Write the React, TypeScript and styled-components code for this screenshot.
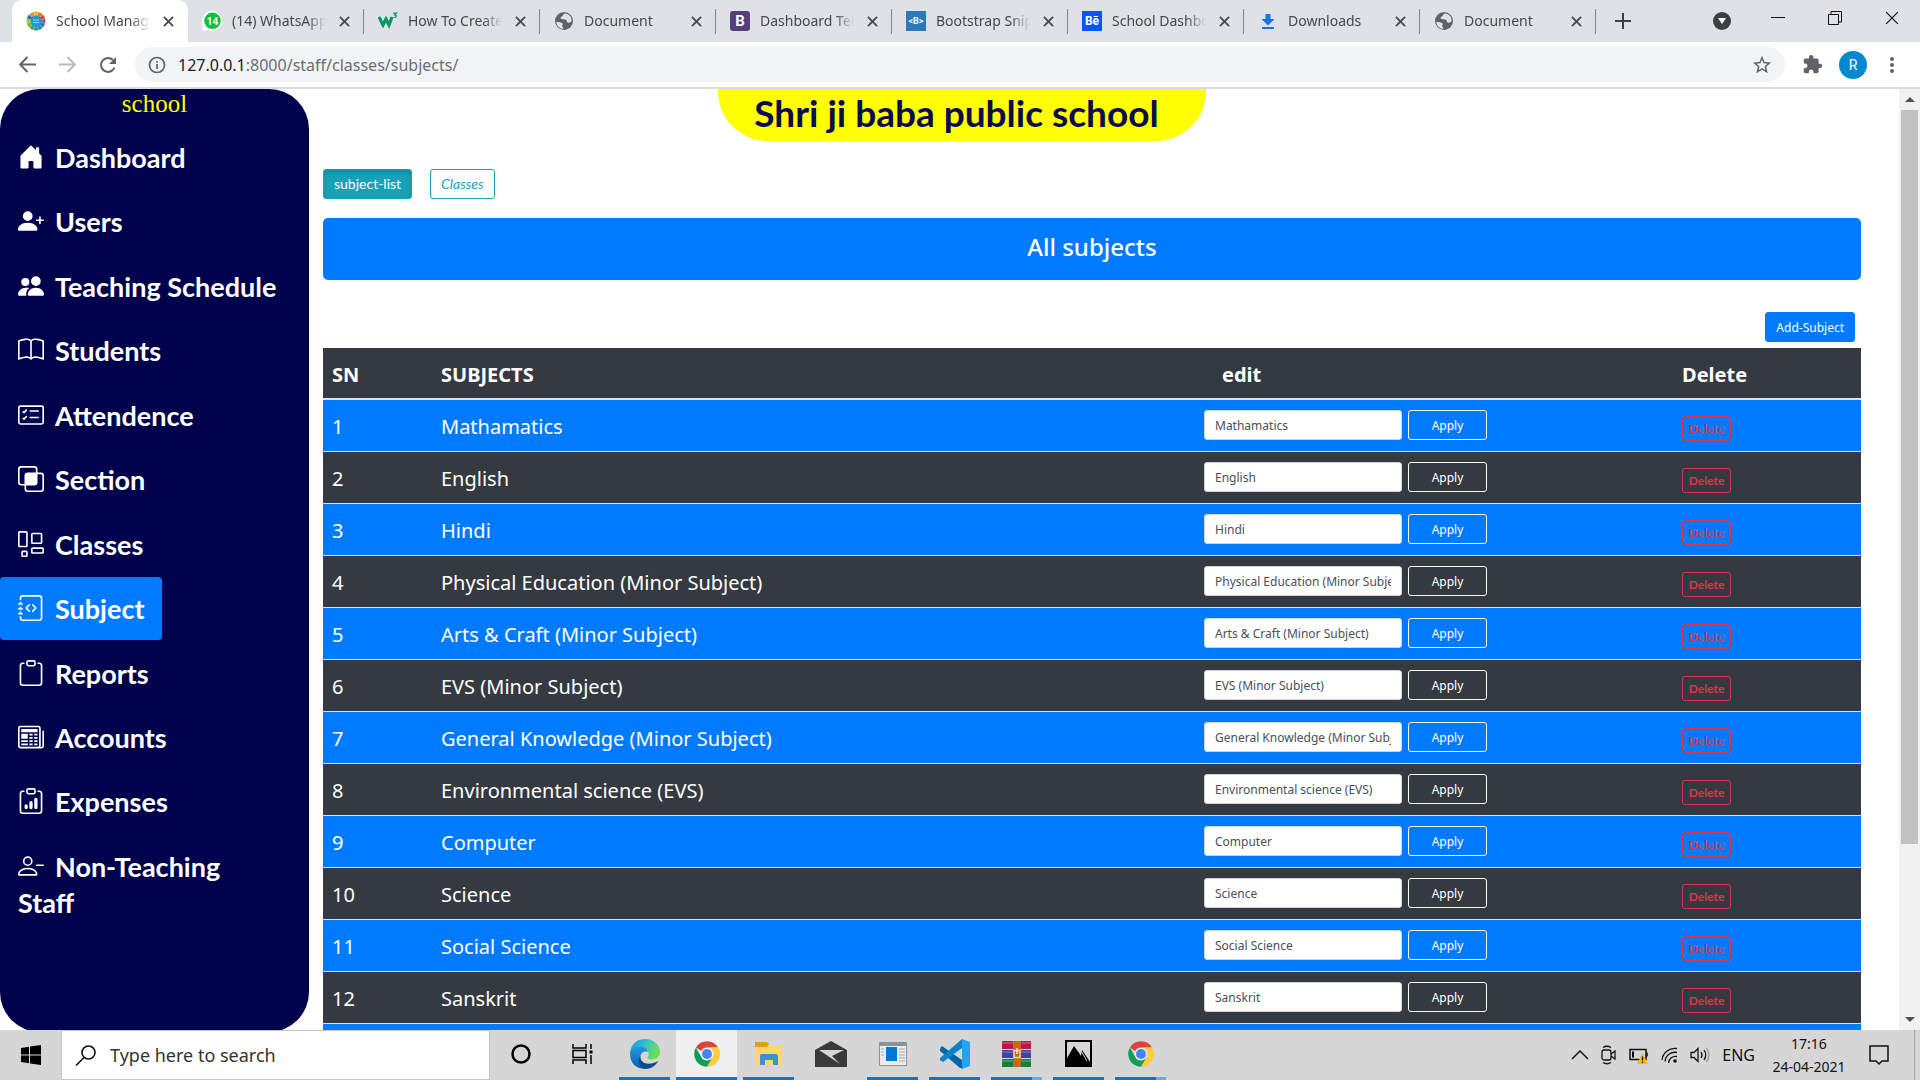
import React from "react";
import styled, { createGlobalStyle, css } from "styled-components";
import {
  BsBook,
  BsCardChecklist,
  BsClipboard,
  BsClipboardData,
  BsIntersect,
  BsJournalCode,
  BsLayoutWtf,
  BsNewspaper,
  BsPersonPlusFill,
} from "react-icons/bs";
import { MdExtension, MdStarBorder } from "react-icons/md";

const ui = '"Segoe UI", "Noto Sans", "Open Sans", sans-serif';
const comic = '"Comic Sans MS", Lato, "Open Sans", sans-serif';
const navy = "#00034b";
const blue = "#007bff";
const dark = "#343a40";
const teal = "#17a2b8";
const red = "#dc3545";

const GlobalStyle = createGlobalStyle`
  *, *::before, *::after { box-sizing: border-box; }
  body { margin: 0; background: #fff; font-family: ${ui}; overflow: hidden; }
  button, input { font-family: inherit; margin: 0; }
  a { text-decoration: none; }
  svg { display: block; flex: none; }
`;

const Screen = styled.div`
  display: flex;
  flex-direction: column;
  height: 100vh;
`;

/* ---------- Browser chrome ---------- */

const TabStrip = styled.div`
  display: flex;
  align-items: flex-end;
  height: 42px;
  padding-left: 12px;
  background: #dee1e6;
`;

const Tab = styled.div<{ $active?: boolean }>`
  display: flex;
  align-items: center;
  flex: 0 1 176px;
  min-width: 0;
  height: 42px;
  padding: 0 12px 0 14px;
  gap: 10px;
  color: #45494d;
  background: ${(p) => (p.$active ? "#fff" : "transparent")};
  border-radius: 10px 10px 0 0;
`;

const TabTitle = styled.span`
  flex: 1;
  min-width: 0;
  overflow: hidden;
  white-space: nowrap;
  font-size: 14px;
  line-height: 20px;
  mask-image: linear-gradient(to right, #000 80%, transparent 100%);
`;

const TabDivider = styled.span`
  flex: none;
  width: 1px;
  height: 25px;
  margin: 0 0 8px -1px;
  background: #85888c;
`;

const IconButton = styled.button<{ $w?: number }>`
  display: flex;
  align-items: center;
  justify-content: center;
  flex: none;
  width: ${(p) => p.$w ?? 16}px;
  height: ${(p) => (p.$w ? 36 : 16)}px;
  padding: 0;
  border: 0;
  background: none;
  color: inherit;
`;

const WindowControls = styled.div`
  display: flex;
  align-items: center;
  align-self: flex-start;
  height: 36px;
  margin-left: auto;
  color: #111;
`;

const NewTab = styled.div`
  display: flex;
  align-self: center;
  padding-left: 9px;
  color: #3c4043;
`;

const Toolbar = styled.div`
  display: flex;
  align-items: center;
  height: 47px;
  padding: 0 3px 0 7px;
  background: #fff;
  border-bottom: 2px solid #dadce0;
  color: #5f6368;
`;

const AddressBar = styled.div`
  display: flex;
  flex: 1;
  align-items: center;
  height: 35px;
  margin-left: 7px;
  padding: 0 12px 0 13px;
  gap: 12px;
  border-radius: 18px;
  background: #f1f3f4;
`;

const Address = styled.div`
  flex: 1;
  font-size: 16px;
  line-height: 24px;
  color: #6a6e72;
  b { font-weight: 400; color: #202124; }
`;

const Avatar = styled.span`
  display: flex;
  align-items: center;
  justify-content: center;
  width: 28px;
  height: 28px;
  border-radius: 50%;
  background: #0288d1;
  color: #fff;
  font: 14px Roboto, sans-serif;
`;

/* ---------- Web page ---------- */

const Page = styled.div`
  display: flex;
  flex: 1;
  min-height: 0;
  overflow: hidden;
`;

const Sidebar = styled.aside`
  flex: none;
  width: 309px;
  height: calc(100% + 2px);
  border-radius: 40px;
  background: ${navy};
`;

const Brand = styled.div`
  text-align: center;
  font: 25px/29px "Times New Roman", "Liberation Serif", serif;
  color: #ff0;
`;

const Nav = styled.nav`
  display: flex;
  flex-direction: column;
  align-items: flex-start;
  gap: 2px;
  padding: 8px 12px 0 0;
`;

const NavLink = styled.a<{ $active?: boolean }>`
  padding: 14px 18px 12px;
  border-radius: 4px;
  background: ${(p) => (p.$active ? blue : "transparent")};
  color: #fff;
  font-family: ${comic};
  font-size: 27px;
  font-weight: 700;
  line-height: 1.35;
  svg {
    display: inline-block;
    width: 26px;
    height: 26px;
    margin-right: 11px;
    vertical-align: -2px;
  }
`;

const Content = styled.main`
  flex: 1;
  min-width: 0;
  padding: 0 38px 0 14px;
`;

const SchoolName = styled.h1`
  width: fit-content;
  height: 52px;
  margin: 0 auto;
  padding: 0 47px 0 36px;
  border-radius: 0 0 50px 50px;
  background: #ff0;
  color: #0b0b50;
  font-family: ${comic};
  font-size: 37px;
  font-weight: 700;
  line-height: 48px;
  white-space: nowrap;
`;

const TitleRow = styled.div`
  padding-right: 260px;
`;

const PillRow = styled.div`
  display: flex;
  gap: 18px;
  margin: 28px 0 19px;
`;

const Pill = styled.a<{ $active?: boolean }>`
  height: 30px;
  padding: 0 10px;
  border: 1px solid ${teal};
  border-radius: 3px;
  font-family: ${comic};
  font-size: 14px;
  line-height: 28px;
  ${(p) =>
    p.$active
      ? css`
          background: ${teal};
          color: #fff;
          box-shadow: inset 0 3px 5px rgba(0, 0, 0, 0.15);
        `
      : css`
          color: ${teal};
          font-style: italic;
        `}
`;

const Banner = styled.h2`
  height: 62px;
  margin: 0;
  border-radius: 5px;
  background: ${blue};
  color: #fff;
  text-align: center;
  font-size: 24px;
  font-weight: 500;
  line-height: 58px;
`;

const Actions = styled.div`
  display: flex;
  justify-content: flex-end;
  padding: 32px 6px 6px 0;
`;

const AddButton = styled.button`
  height: 30px;
  padding: 0 10px;
  border: 1px solid ${blue};
  border-radius: 3px;
  background: ${blue};
  color: #fff;
  font-size: 12px;
`;

const Table = styled.table`
  width: 100%;
  border-spacing: 0;
  table-layout: fixed;
  color: #fff;
  font-size: 20px;
`;

const Th = styled.th<{ $w?: number; $indent?: boolean }>`
  width: ${(p) => (p.$w ? p.$w + "px" : "auto")};
  height: 52px;
  padding: 2px 0 0 ${(p) => (p.$indent ? 27 : 9)}px;
  border-bottom: 2px solid #dee2e6;
  background: ${dark};
  text-align: left;
  font-size: 20px;
  font-weight: 700;
`;

const Row = styled.tr`
  background: ${dark};
  &:nth-child(odd) { background: ${blue}; }
`;

const Td = styled.td<{ $align?: "top" | "bottom" }>`
  height: 52px;
  padding: ${(p) => (p.$align ? "10px 0 10px 9px" : "2px 0 0 9px")};
  border-bottom: 1px solid #dee2e6;
  vertical-align: ${(p) => p.$align ?? "middle"};
`;

const EditForm = styled.form`
  display: flex;
  gap: 6px;
`;

const NameInput = styled.input`
  width: 198px;
  height: 30px;
  padding: 0 10px;
  border: 1px solid #ced4da;
  border-radius: 3px;
  background: #fff;
  color: #495057;
  font-size: 12px;
`;

const ApplyButton = styled.button`
  width: 79px;
  height: 30px;
  padding: 0;
  border: 1px solid #f8f9fa;
  border-radius: 3px;
  background: transparent;
  color: #fff;
  font-size: 12px;
`;

const DeleteButton = styled.button`
  display: block;
  width: 49px;
  height: 25px;
  padding: 0;
  border: 1px solid ${red};
  border-radius: 3px;
  background: transparent;
  color: ${red};
  font-family: ${comic};
  font-size: 12px;
  font-weight: 700;
`;

const ScrollTrack = styled.div`
  display: flex;
  flex-direction: column;
  align-items: center;
  flex: none;
  width: 21px;
  background: #f1f1f1;
`;

const ScrollArrow = styled.span`
  display: flex;
  align-items: center;
  justify-content: center;
  height: 21px;
`;

const ScrollThumb = styled.span`
  flex: 0 0 78%;
  width: 17px;
  margin-bottom: auto;
  background: #c1c1c1;
`;

/* ---------- Taskbar ---------- */

const Taskbar = styled.footer`
  display: flex;
  flex: none;
  height: 50px;
  background: #d6d6d6;
  color: #111;
`;

const StartButton = styled.button`
  display: flex;
  align-items: center;
  justify-content: center;
  width: 61px;
  padding: 0;
  border: 0;
  background: none;
`;

const SearchBox = styled.label`
  display: flex;
  align-items: center;
  width: 429px;
  padding-left: 13px;
  gap: 14px;
  border: 1px solid #c6c6c6;
  background: #fff;
`;

const SearchInput = styled.input`
  flex: 1;
  min-width: 0;
  padding: 0;
  border: 0;
  outline: 0;
  background: none;
  font-size: 18px;
  &::placeholder { color: #333; opacity: 1; }
`;

const AppList = styled.div`
  display: flex;
  gap: 1px;
`;

const AppButton = styled.button<{ $running?: boolean; $focused?: boolean; $stacked?: boolean }>`
  display: flex;
  flex-direction: column;
  align-items: center;
  justify-content: center;
  width: 61px;
  padding: 0;
  border: 0;
  background: ${(p) => (p.$focused ? "#efefef" : "transparent")};
  svg { margin: auto; }
  &::after {
    content: "";
    width: ${(p) => (p.$focused ? 61 : 51)}px;
    height: 3px;
    background: ${(p) =>
      p.$stacked
        ? "linear-gradient(to right, #0078d7 80%, #62adeb 80%)"
        : p.$running
          ? "#0078d7"
          : "transparent"};
  }
`;

const Tray = styled.div`
  display: flex;
  align-items: center;
  gap: 12px;
  margin-left: auto;
  font-size: 16px;
`;

const Clock = styled.time`
  width: 76px;
  margin: 0 10px 0 4px;
  text-align: center;
  font-size: 14px;
  line-height: 23px;
  white-space: nowrap;
`;

const ShowDesktop = styled.span`
  width: 6px;
  height: 50px;
  margin-left: 13px;
  border-left: 1px solid #a2a2a2;
`;

/* ---------- Icons ---------- */

const Cross = ({ size = 12, w = 2 }: { size?: number; w?: number }) => (
  <svg width={size} height={size} viewBox="0 0 12 12" stroke="currentColor" strokeWidth={w} fill="none">
    <path d="M1 1l10 10M11 1L1 11" />
  </svg>
);

const Globe = () => (
  <svg width="20" height="20" viewBox="0 0 20 20">
    <circle cx="10" cy="10" r="9" fill="#5f6368" />
    <path d="M2.500 11c3 .2 4.800 0 6 1.500s-1.500 1.800 0 3.200c1 .8.4 1.800.3 2.300C5 17.300 2.300 14.500 2.500 11zM11 2.500c-2.300.2-1.200 2-3 2.700-1.600.7-1.800 2.200-.5 2.800 1.700.6 3-.5 4.500.8 1.200 1 .3 2.500 2 2.900 1.700.3 2.300-1 3.400-1C18.500 6.500 15.500 3 11 2.500z" fill="#dee1e6" />
  </svg>
);

const SchoolIcon = () => {
  const colors = ["#f2b233", "#e8722d", "#d94b36", "#8d5a9a", "#3178b5", "#2387c4", "#2d9aa8", "#4f9f5c", "#7eae3f", "#c9b53a", "#2d6ea5", "#e0952f"];
  return (
    <svg width="20" height="20" viewBox="-10 -10 20 20">
      {colors.map((c, i) => (
        <path key={c} d="M0 0L-2.300-9.200A9.600 9.600 0 0 1 2.300-9.200z" fill={c} transform={`rotate(${i * 30})`} />
      ))}
      <circle r="5.500" fill="#1a9be0" />
      <path d="M-3-1h6M-3 1.500h6" stroke="#8fd3f5" />
    </svg>
  );
};

const WhatsApp = () => (
  <svg width="20" height="20" viewBox="0 0 20 20">
    <path d="M10 0a10 10 0 0 1 0 20c-2 0-3.300-.4-4.700-1.200L0 20l1.300-5A10 10 0 0 1 10 0z" fill="#fff" />
    <circle cx="10.500" cy="9.800" r="8.300" fill="#0fc143" />
    <text x="10.500" y="13.500" fontSize="10" fontWeight="700" fontFamily="Roboto" fill="#fff" textAnchor="middle">14</text>
  </svg>
);

const W3 = () => (
  <svg width="20" height="20" viewBox="0 0 20 20" fill="none" stroke="#059862">
    <path d="M1 6l4 8 3-6 3 6 3-8" strokeWidth="3.200" />
    <path d="M15 2.200h3.500L16.700 4c2.300 0 2.300 3-.9 2.400" strokeWidth="1.200" />
  </svg>
);

const BadgeIcon = ({ text, fill, r = 0, fs }: { text: string; fill: string; r?: number; fs: number }) => (
  <svg width="20" height="20" viewBox="0 0 20 20">
    <rect width="20" height="20" rx={r} fill={fill} />
    <text x="10" y={10 + fs * 0.36} fontSize={fs} fontWeight="700" fontFamily="Roboto" fill="#fff" textAnchor="middle">{text}</text>
  </svg>
);

const DownloadIcon = () => (
  <svg width="20" height="20" viewBox="0 0 20 20" fill="#1a73e8">
    <path d="M7.500 3h5v5h4L10 14.500 3.500 8h4zM4 16h12v2H4z" />
  </svg>
);

const HouseIcon = () => (
  <svg viewBox="0 0 16 16" fill="currentColor">
    <path d="M6.500 14.500v-3.505c0-.245.25-.495.5-.495h2c.25 0 .5.25.5.5v3.500a.5.5 0 0 0 .5.5h4a.5.5 0 0 0 .5-.5v-7a.5.5 0 0 0-.146-.354L13 5.793V2.500a.5.5 0 0 0-.5-.5h-1a.5.5 0 0 0-.5.5v1.293L8.354 1.146a.5.5 0 0 0-.708 0l-6 6A.5.5 0 0 0 1.500 7.500v7a.5.5 0 0 0 .5.5h4a.5.5 0 0 0 .5-.5z" />
  </svg>
);

const PeopleIcon = () => (
  <svg viewBox="0 0 16 16" fill="currentColor">
    <path d="M7 14s-1 0-1-1 1-4 5-4 5 3 5 4-1 1-1 1H7zm4-6a3 3 0 1 0 0-6 3 3 0 0 0 0 6z" />
    <path d="M5.216 14A2.238 2.238 0 0 1 5 13c0-1.355.68-2.750 1.936-3.720A6.325 6.325 0 0 0 5 9c-4 0-5 3-5 4s1 1 1 1h4.216z" />
    <path d="M4.500 8a2.500 2.500 0 1 0 0-5 2.500 2.500 0 0 0 0 5z" />
  </svg>
);

const PersonDashIcon = () => (
  <svg viewBox="0 0 16 16" fill="currentColor">
    <path
      fillRule="evenodd"
      d="M8 5a2 2 0 1 1-4 0 2 2 0 0 1 4 0zM6 8a3 3 0 1 0 0-6 3 3 0 0 0 0 6zm6 5c0 1-1 1-1 1H1s-1 0-1-1 1-4 6-4 6 3 6 4zm-1-.004c-.001-.246-.154-.986-.832-1.664C9.516 10.680 8.289 10 6 10c-2.290 0-3.516.68-4.168 1.332-.678.678-.83 1.418-.832 1.664h10zM11 7.500a.5.5 0 0 1 .5-.5h4a.5.5 0 0 1 0 1h-4a.5.5 0 0 1-.5-.5z"
    />
  </svg>
);

const ChromeIcon = () => (
  <svg width="28" height="28" viewBox="0 0 48 48">
    <path d="M24 2a22 22 0 0 1 19 11H24a11 11 0 0 0-10 6L5 13A22 22 0 0 1 24 2z" fill="#db4437" />
    <path d="M43.500 13A22 22 0 0 1 24 46l9.500-16.500A11 11 0 0 0 33 17l-3-4z" fill="#ffcd40" />
    <path d="M5 13a22 22 0 0 0 19 33l9.500-16.500c-5 8-16 7-19 0z" fill="#0f9d58" />
    <circle cx="24" cy="24" r="10.500" fill="#f1f1f1" />
    <circle cx="24" cy="24" r="8.500" fill="#4285f4" />
  </svg>
);

const EdgeIcon = () => (
  <svg width="30" height="30" viewBox="0 0 30 30">
    <defs>
      <linearGradient id="edgeTop" x1="0" x2="1" y1="0" y2=".4">
        <stop offset="0" stopColor="#1b8fd8" />
        <stop offset=".5" stopColor="#2fc0d8" />
        <stop offset="1" stopColor="#6be04f" />
      </linearGradient>
      <linearGradient id="edgeBody" x1="0" x2="0" y1="0" y2="1">
        <stop offset="0" stopColor="#2398e0" />
        <stop offset="1" stopColor="#0a5fb4" />
      </linearGradient>
    </defs>
    <path d="M0 14C1 5 7 0 15 0c9 0 15 6 15 13 0 5-4 7.500-8 7.500-4 0-5-1.500-4-3 2-3 0-7-5-7-6 0-11 2-13 3.500z" fill="url(#edgeTop)" />
    <path d="M0 15c0-5 6-8 11-7.500 4 .4 6.500 3 6.500 5.500-4-2-8 2-7 7 1 5 6 8 10 7.500C13 33 0 28 0 15z" fill="url(#edgeBody)" />
    <path d="M10.500 17c-1 7 8 10.500 17.500 5-2 4.500-7 8-13 8-5-1-9-8-4.500-13z" fill="#114a8b" />
  </svg>
);

const FolderIcon = () => (
  <svg width="28" height="26" viewBox="0 0 28 26">
    <path d="M0 2h11l3 3h13v20H0z" fill="#ffd869" />
    <path d="M0 1h12l2 2-2 3H0z" fill="#e0a00b" />
    <path d="M5 24V15a2 2 0 0 1 2-2h14a2 2 0 0 1 2 2v9h-5v-5h-8v5z" fill="#3f8ed0" />
  </svg>
);

const MailIcon = () => (
  <svg width="32" height="26" viewBox="0 0 32 26">
    <path d="M0 9L16 0l16 9v17H0z" fill="#3a3a3a" />
    <path d="M4 9h25L17 15l8 8z" fill="#d6d6d6" />
  </svg>
);

const NewsIcon = () => (
  <svg width="28" height="24" viewBox="0 0 28 24">
    <path d="M.5.5h27v23H.5z" fill="#ececec" stroke="#8a9299" />
    <path d="M1 1h26v3H1z" fill="#8a9299" />
    <path d="M7 5h11v14H7z" fill="#0078d7" />
    <path d="M20 7h6M20 10h6M20 13h6M20 16h6M2 7h3M2 10h3M2 13h3M20 19h6" stroke="#a5aaae" />
  </svg>
);

const CodeIcon = () => (
  <svg width="30" height="30" viewBox="0 0 30 30">
    <path d="M22 8v14L2 7 0 9l22 21z" fill="#0a7bc4" />
    <path d="M3 8L0 10v2l20 17h2V21z" fill="#0065a9" />
    <path d="M22 0L0 19v2l3 2L22 9z" fill="#1180cb" />
    <path d="M22 0l8 3v24l-8 3z" fill="#26a3ef" />
  </svg>
);

const RarIcon = () => (
  <svg width="30" height="26" viewBox="0 0 30 26">
    <path d="M0 0h29v8H0z" fill="#b8173f" />
    <path d="M0 9h29v8H0z" fill="#4040a8" />
    <path d="M0 18h29v8H0z" fill="#14803c" />
    <path d="M0 2h29M0 11h29M0 20h29" stroke="#fff" strokeOpacity=".35" />
    <path d="M11 0h8v26h-8z" fill="#c46a1c" />
    <path d="M12 9.500h6v7h-6z" fill="none" stroke="#ecd9a8" strokeWidth="1.500" />
    <path d="M15 7v6" stroke="#f4f0e0" strokeWidth="1.500" />
  </svg>
);

const PhotosIcon = () => (
  <svg width="27" height="27" viewBox="0 0 27 27">
    <path d="M1 1h25v25H1z" fill="#d6d6d6" stroke="#000" strokeWidth="2" />
    <path d="M1 20L9 6l5 7 2 3 1-6 8 12v4H1z" />
    <path d="M15 9l7 12" stroke="#d6d6d6" />
  </svg>
);

const TaskViewIcon = () => (
  <svg width="22" height="20" viewBox="0 0 22 20" fill="none" stroke="#000" strokeWidth="1.500">
    <path d="M1 0v4h13V0M1 20v-4h13v4M1 6.500h13v7H1zM19 0v5M19 11v9" />
    <path d="M17.500 6.500h3v3h-3z" fill="#000" stroke="none" />
  </svg>
);

/* ---------- Data ---------- */

const tabs: { title: string; icon: React.ReactNode }[] = [
  { title: "School Manag", icon: <SchoolIcon /> },
  { title: "(14) WhatsApp", icon: <WhatsApp /> },
  { title: "How To Create", icon: <W3 /> },
  { title: "Document", icon: <Globe /> },
  { title: "Dashboard Ter", icon: <BadgeIcon text="B" fill="#563d7c" r={3} fs={15} /> },
  { title: "Bootstrap Snip", icon: <BadgeIcon text="<B>" fill="#2a7ab9" fs={9} /> },
  { title: "School Dashbo", icon: <BadgeIcon text="Bē" fill="#0057ff" fs={12} /> },
  { title: "Downloads", icon: <DownloadIcon /> },
  { title: "Document", icon: <Globe /> },
];

const links: { label: string; icon: React.ReactNode }[] = [
  { label: "Dashboard", icon: <HouseIcon /> },
  { label: "Users", icon: <BsPersonPlusFill /> },
  { label: "Teaching Schedule", icon: <PeopleIcon /> },
  { label: "Students", icon: <BsBook /> },
  { label: "Attendence", icon: <BsCardChecklist /> },
  { label: "Section", icon: <BsIntersect /> },
  { label: "Classes", icon: <BsLayoutWtf /> },
  { label: "Subject", icon: <BsJournalCode /> },
  { label: "Reports", icon: <BsClipboard /> },
  { label: "Accounts", icon: <BsNewspaper /> },
  { label: "Expenses", icon: <BsClipboardData /> },
  { label: "Non-Teaching Staff", icon: <PersonDashIcon /> },
];

const subjects = [
  "Mathamatics",
  "English",
  "Hindi",
  "Physical Education (Minor Subject)",
  "Arts & Craft (Minor Subject)",
  "EVS (Minor Subject)",
  "General Knowledge (Minor Subject)",
  "Environmental science (EVS)",
  "Computer",
  "Science",
  "Social Science",
  "Sanskrit",
];

/* ---------- Sections ---------- */

const Browser = () => (
  <header>
    <TabStrip>
      {tabs.map((t, i) => (
        <React.Fragment key={i}>
          <Tab $active={i === 0}>
            {t.icon}
            <TabTitle>{t.title}</TabTitle>
            <IconButton aria-label="Close tab"><Cross size={11} /></IconButton>
          </Tab>
          {i > 0 && <TabDivider />}
        </React.Fragment>
      ))}
      <NewTab>
        <IconButton $w={36} aria-label="New tab">
          <svg width="16" height="16" viewBox="0 0 16 16" stroke="currentColor" strokeWidth="2"><path d="M8 0v16M0 8h16" /></svg>
        </IconButton>
      </NewTab>
      <WindowControls>
        <IconButton $w={54} aria-label="Search tabs">
          <svg width="18" height="26" viewBox="0 0 18 26"><circle cx="9" cy="16" r="9" fill="#3c4043" /><path d="M5 13h8l-4 6z" fill="#fff" /></svg>
        </IconButton>
        <IconButton $w={57} aria-label="Minimize">
          <svg width="14" height="14" viewBox="0 0 14 14" stroke="currentColor"><path d="M0 6.500h14" /></svg>
        </IconButton>
        <IconButton $w={57} aria-label="Restore">
          <svg width="14" height="14" viewBox="0 0 14 14" stroke="currentColor" fill="none"><path d="M.5 3.500h10v10H.5zM3 3.500v-3h10.500V11h-3" /></svg>
        </IconButton>
        <IconButton $w={57} aria-label="Close"><Cross size={14} w={1} /></IconButton>
      </WindowControls>
    </TabStrip>
    <Toolbar>
      <IconButton $w={40} aria-label="Back">
        <svg width="17" height="17" viewBox="0 0 16 16" stroke="currentColor" strokeWidth="1.900" fill="none"><path d="M16 8H1.500M8 1L1 8l7 7" /></svg>
      </IconButton>
      <IconButton $w={41} aria-label="Forward">
        <svg width="17" height="17" viewBox="0 0 16 16" stroke="#b8babd" strokeWidth="1.900" fill="none"><path d="M0 8h14.500M8 1l7 7-7 7" /></svg>
      </IconButton>
      <IconButton $w={40} aria-label="Reload">
        <svg width="18" height="18" viewBox="0 0 18 18"><path d="M15.500 11.500A7 7 0 1 1 14 4" fill="none" stroke="currentColor" strokeWidth="2" /><path d="M17 1v7h-7z" fill="currentColor" /></svg>
      </IconButton>
      <AddressBar>
        <svg width="18" height="18" viewBox="0 0 18 18" stroke="currentColor" strokeWidth="1.700" fill="none"><circle cx="9" cy="9" r="7.500" /><path d="M9 8v5M9 5v1.800" /></svg>
        <Address><b>127.0.0.1</b>:8000/staff/classes/subjects/</Address>
        <MdStarBorder size={22} />
      </AddressBar>
      <IconButton $w={54} aria-label="Extensions"><MdExtension size={21} /></IconButton>
      <Avatar>R</Avatar>
      <IconButton $w={50} aria-label="Menu">
        <svg width="4" height="16" viewBox="0 0 4 16" fill="currentColor"><circle cx="2" cy="2" r="2" /><circle cx="2" cy="8" r="2" /><circle cx="2" cy="14" r="2" /></svg>
      </IconButton>
    </Toolbar>
  </header>
);

const SubjectTable = () => (
  <Table>
    <thead>
      <tr>
        <Th $w={109}>SN</Th>
        <Th>SUBJECTS</Th>
        <Th $w={478} $indent>edit</Th>
        <Th $w={188}>Delete</Th>
      </tr>
    </thead>
    <tbody>
      {subjects.map((s, i) => (
        <Row key={s}>
          <Td>{i + 1}</Td>
          <Td>{s}</Td>
          <Td $align="top">
            <EditForm onSubmit={(e) => e.preventDefault()}>
              <NameInput aria-label={`Subject ${i + 1}`} defaultValue={s} />
              <ApplyButton>Apply</ApplyButton>
            </EditForm>
          </Td>
          <Td $align="bottom"><DeleteButton>Delete</DeleteButton></Td>
        </Row>
      ))}
      <Row><Td colSpan={4} /></Row>
    </tbody>
  </Table>
);

const WindowsTaskbar = () => (
  <Taskbar>
    <StartButton aria-label="Start">
      <svg width="20" height="20" viewBox="0 0 20 20"><path d="M0 3l8-1.200v7.700H0zM9 1.600L20 0v9.500H9zM0 10.500h8v7.700L0 17zM9 10.500h11V20L9 18.400z" /></svg>
    </StartButton>
    <SearchBox>
      <svg width="21" height="21" viewBox="0 0 21 21" fill="none" stroke="#111" strokeWidth="1.600"><circle cx="13.500" cy="7.500" r="6.500" /><path d="M9 12.500L1 20.500" /></svg>
      <SearchInput placeholder="Type here to search" aria-label="Search" />
    </SearchBox>
    <AppList>
      <AppButton aria-label="Cortana"><svg width="20" height="20" viewBox="0 0 20 20"><circle cx="10" cy="10" r="8.500" fill="none" stroke="#000" strokeWidth="2.500" /></svg></AppButton>
      <AppButton aria-label="Task view"><TaskViewIcon /></AppButton>
      <AppButton aria-label="Edge" $running><EdgeIcon /></AppButton>
      <AppButton aria-label="Chrome" $running $focused><ChromeIcon /></AppButton>
      <AppButton aria-label="Explorer" $running><FolderIcon /></AppButton>
      <AppButton aria-label="Mail"><MailIcon /></AppButton>
      <AppButton aria-label="News" $running><NewsIcon /></AppButton>
      <AppButton aria-label="Code" $running><CodeIcon /></AppButton>
      <AppButton aria-label="WinRAR" $stacked><RarIcon /></AppButton>
      <AppButton aria-label="Photos" $running><PhotosIcon /></AppButton>
      <AppButton aria-label="Chrome profile" $stacked><ChromeIcon /></AppButton>
    </AppList>
    <Tray>
      <svg width="18" height="12" viewBox="0 0 18 12" fill="none" stroke="#111" strokeWidth="1.500"><path d="M1 10l8-8 8 8" /></svg>
      <svg width="16" height="20" viewBox="0 0 16 20" fill="none" stroke="#111" strokeWidth="1.300"><rect x="1" y="5" width="9" height="10" rx="2" /><path d="M10 9l4-3v8l-4-3M2 2.500q4-2.500 8 0M2 17.500q4 2.500 8 0" /></svg>
      <svg width="20" height="18" viewBox="0 0 20 18"><path d="M1 3.500h16v10H1zM18 6.500v4" fill="none" stroke="#111" strokeWidth="1.500" /><path d="M3 5.500h2v6H3z" /><path d="M13.500 7L19 18H8z" fill="#fbbc09" /><path d="M13.500 10.500v4M13.500 15.500v1.500" stroke="#111" strokeWidth="1.300" /></svg>
      <svg width="17" height="17" viewBox="0 0 17 17" fill="none" stroke="#111" strokeWidth="1.300"><path d="M1 13A13 13 0 0 1 16 1.500M4 14.500A10 10 0 0 1 16 5.500M7.500 16A7 7 0 0 1 16 9.500" /><circle cx="14" cy="14" r="1.800" fill="#111" stroke="none" /></svg>
      <svg width="20" height="18" viewBox="0 0 20 18" fill="none" stroke="#111" strokeWidth="1.300"><path d="M1 6.500h3l4-4v13l-4-4H1zM11 6q2 3 0 6M14 4q3.500 5 0 10" /><path d="M16.500 2q5 7 0 14" stroke="#999" /></svg>
      <span>ENG</span>
      <Clock>17:16<br />24-04-2021</Clock>
      <svg width="20" height="21" viewBox="0 0 20 21" fill="none" stroke="#111" strokeWidth="1.500"><path d="M1 1h18v15h-6l-3 3-3-3H1z" /></svg>
      <ShowDesktop />
    </Tray>
  </Taskbar>
);

export default function App() {
  return (
    <Screen>
      <GlobalStyle />
      <Browser />
      <Page>
        <Sidebar>
          <Brand>school</Brand>
          <Nav>
            {links.map((l) => (
              <NavLink key={l.label} href="#" $active={l.label === "Subject"}>
                {l.icon}
                {l.label}
              </NavLink>
            ))}
          </Nav>
        </Sidebar>
        <Content>
          <TitleRow><SchoolName>Shri ji baba public school</SchoolName></TitleRow>
          <PillRow>
            <Pill href="#" $active>subject-list</Pill>
            <Pill href="#">Classes</Pill>
          </PillRow>
          <Banner>All subjects</Banner>
          <Actions><AddButton>Add-Subject</AddButton></Actions>
          <SubjectTable />
        </Content>
        <ScrollTrack>
          <ScrollArrow><svg width="10" height="5" viewBox="0 0 10 5" fill="#505050"><path d="M5 0l5 5H0z" /></svg></ScrollArrow>
          <ScrollThumb />
          <ScrollArrow><svg width="10" height="5" viewBox="0 0 10 5" fill="#505050"><path d="M5 5L0 0h10z" /></svg></ScrollArrow>
        </ScrollTrack>
      </Page>
      <WindowsTaskbar />
    </Screen>
  );
}
